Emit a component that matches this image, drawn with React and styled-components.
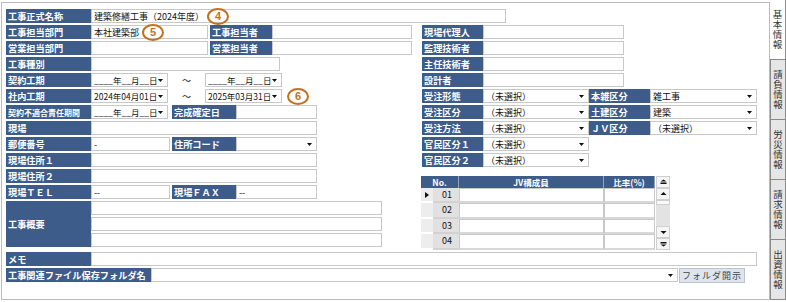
import React from 'react'
import styled, { createGlobalStyle } from 'styled-components'

const GlobalStyle = createGlobalStyle`
  html, body { margin: 0; padding: 0; background: #fff; }
  body { font-family: "Noto Sans CJK JP", "Noto Sans", sans-serif; color: #111; }
  * { box-sizing: border-box; }
`

const BLUE = '#3d5c8a'

const Screen = styled.div`
  display: flex;
  width: 786px;
  height: 302px;
  overflow: hidden;
`

const Panel = styled.div`
  width: 769px;
  height: 298px;
  margin: 2px 0 0 1px;
  border: 1px solid #bcbcbc;
  padding: 6px 0 0 4px;
  display: flex;
  flex-direction: column;
  gap: 2px;
`

const Row = styled.div`
  display: flex;
  align-items: center;
  height: 14px;
`

const Columns = styled.div`
  display: flex;
  align-items: flex-start;
`

const Col = styled.div`
  display: flex;
  flex-direction: column;
  gap: 2px;
  width: ${p => p.$w}px;
  margin-left: ${p => p.$ml || 0}px;
`

const Label = styled.div`
  flex: none;
  display: flex;
  align-items: center;
  width: ${p => p.$w || 85}px;
  height: ${p => p.$h || 14}px;
  margin-left: ${p => p.$ml || 0}px;
  padding-left: 2px;
  background: ${BLUE};
  color: #fff;
  font-size: ${p => p.$fs || 9.2}px;
  font-weight: bold;
  white-space: nowrap;
  overflow: hidden;
`

const Field = styled.div`
  flex: none;
  display: flex;
  align-items: center;
  width: ${p => p.$w}px;
  height: 14px;
  margin-left: ${p => p.$ml || 0}px;
  padding: 0 2px;
  background: #fff;
  border: 1px solid #c8c8c8;
  font-size: ${p => p.$fs || 9}px;
  white-space: nowrap;
`

const CaretIcon = styled.svg`
  flex: none;
  margin-left: auto;
  margin-right: 2px;
`

const Tilde = styled.div`
  flex: none;
  width: 37px;
  text-align: center;
  font-size: 9px;
`

const Badge = styled.span`
  flex: none;
  display: inline-flex;
  align-items: center;
  justify-content: center;
  width: 22px;
  height: 17px;
  margin-left: ${p => p.$ml || 3}px;
  border: 2px solid #c4701f;
  border-radius: 50%;
  color: #c4701f;
  font-size: 11px;
  font-weight: bold;
  font-family: "Liberation Sans", sans-serif;
`

const Block = styled.div`
  display: flex;
`

const Stack = styled.div`
  display: flex;
  flex-direction: column;
  gap: 2px;
`

const FolderButton = styled.div`
  flex: none;
  width: 66px;
  height: 15px;
  margin-left: 1px;
  display: flex;
  align-items: center;
  justify-content: center;
  background: #dfe5ee;
  border: 1px solid #b9c2cf;
  color: #444;
  font-size: 9px;
  letter-spacing: 1px;
  white-space: nowrap;
`

/* JV table */
const JvWrap = styled.div`
  display: flex;
  margin: 7px 0 0 -1px;
`

const JvGrid = styled.div`
  display: grid;
  grid-template-columns: 12px 26px 145px 51px;
  grid-template-rows: 12px 15px 16px 15px 16px;
`

const HeadCell = styled.div`
  grid-column: span ${p => p.$span || 1};
  background: ${BLUE};
  color: #fff;
  font-size: 8.5px;
  font-weight: bold;
  line-height: 12px;
  text-align: center;
  border-right: 1px solid #8fa3bf;
`

const IndCell = styled.div`
  display: flex;
  align-items: center;
  justify-content: center;
  background: #ededed;
  border-bottom: 2px solid #fff;
`

const NoCell = styled.div`
  background: #e1e1e1;
  border-bottom: 2px solid #d2d2d2;
  font-size: 9px;
  text-align: right;
  padding-right: 7px;
  line-height: 13px;
`

const DataCell = styled.div`
  background: #fff;
  border: 1px solid #c8c8c8;
  border-bottom-width: 2px;
  border-bottom-color: #d8d8d8;
`

const ScrollBar = styled.div`
  display: flex;
  flex-direction: column;
  width: 14px;
  height: 74px;
  margin-left: 1px;
  background: #e3e3e3;
`

const ScrollBtn = styled.div`
  height: 12px;
  display: flex;
  align-items: center;
  justify-content: center;
  background: #f5f5f5;
  border: 1px solid #d0d0d0;
`

const Thumb = styled.div`
  height: 5px;
  background: #fafafa;
  border: 1px solid #cfcfcf;
`

const Track = styled.div`
  flex: 1;
`

/* tabs */
const TabStrip = styled.div`
  width: 16px;
  height: 300px;
  display: flex;
  flex-direction: column;
`

const Tab = styled.div`
  height: 60px;
  display: flex;
  align-items: center;
  justify-content: center;
  background: ${p => (p.$active ? '#fff' : '#e6e6e6')};
  border-right: 1px solid #8a8a8a;
  border-bottom: 1px solid #8a8a8a;
  border-left: ${p => (p.$active ? 'none' : '1px solid #8a8a8a')};
  color: #333;
  font-size: 9.5px;
  span {
    writing-mode: vertical-rl;
    text-orientation: upright;
    letter-spacing: 0.5px;
  }
`

function Caret() {
  return (
    <CaretIcon width="5" height="3" viewBox="0 0 5 3">
      <path d="M0 0h5L2.5 3z" fill="#111" />
    </CaretIcon>
  )
}

function Select({ w, ml, fs, value }) {
  return (
    <Field $w={w} $ml={ml} $fs={fs}>
      <span>{value}</span>
      <Caret />
    </Field>
  )
}

function DateBox({ value = '____年__月__日' }) {
  return <Select w={77} fs={8.5} value={value} />
}

function ScrollIcon({ dir, bar }) {
  const up = dir === 'up'
  return (
    <svg width="7" height="6" viewBox="0 0 7 6">
      {up ? <path d={bar ? 'M0.5 2.5L3.5 0.5 6.5 2.5z' : 'M0.5 4L3.5 1 6.5 4z'} fill="#111" />
          : <path d={bar ? 'M0.5 3.5L3.5 5.5 6.5 3.5z' : 'M0.5 2L3.5 5 6.5 2z'} fill="#111" />}
      {bar && <rect x="0.5" y={up ? 3.5 : 1} width="6" height="1.5" fill="#111" />}
    </svg>
  )
}

function Pointer() {
  return (
    <svg width="4" height="6" viewBox="0 0 4 6">
      <path d="M0 0L4 3 0 6z" fill="#111" />
    </svg>
  )
}

const jvRows = ['01', '02', '03', '04']
const tabs = ['基本情報', '請負情報', '労災情報', '請求情報', '出資情報']

export default function App() {
  return (
    <Screen>
      <GlobalStyle />
      <Panel>
        <Row>
          <Label>工事正式名称</Label>
          <Field $w={415}>
            建築修繕工事（2024年度）
            <Badge>4</Badge>
          </Field>
        </Row>

        <Columns>
          <Col $w={406}>
            <Row>
              <Label>工事担当部門</Label>
              <Field $w={117}>
                本社建築部
                <Badge>5</Badge>
              </Field>
              <Label $w={62} $ml={2}>工事担当者</Label>
              <Field $w={140} />
            </Row>
            <Row>
              <Label>営業担当部門</Label>
              <Field $w={117} />
              <Label $w={62} $ml={2}>営業担当者</Label>
              <Field $w={140} />
            </Row>
            <Row>
              <Label>工事種別</Label>
              <Field $w={189} />
            </Row>
            <Row>
              <Label>契約工期</Label>
              <DateBox />
              <Tilde>～</Tilde>
              <DateBox />
            </Row>
            <Row>
              <Label>社内工期</Label>
              <DateBox value="2024年04月01日" />
              <Tilde>～</Tilde>
              <DateBox value="2025年03月31日" />
              <Badge $ml={5}>6</Badge>
            </Row>
            <Row>
              <Label $fs={8}>契約不適合責任期間</Label>
              <DateBox />
              <Label $w={64} $ml={4}>完成確定日</Label>
              <Field $w={81} />
            </Row>
            <Row>
              <Label>現場</Label>
              <Field $w={226} />
            </Row>
            <Row>
              <Label>郵便番号</Label>
              <Field $w={79}>-</Field>
              <Label $w={64} $ml={2}>住所コード</Label>
              <Select w={81} value="" />
            </Row>
            <Row>
              <Label>現場住所１</Label>
              <Field $w={226} />
            </Row>
            <Row>
              <Label>現場住所２</Label>
              <Field $w={226} />
            </Row>
            <Row>
              <Label>現場ＴＥＬ</Label>
              <Field $w={79}>--</Field>
              <Label $w={64} $ml={2}>現場ＦＡＸ</Label>
              <Field $w={81}>--</Field>
            </Row>
            <Block>
              <Label $h={46}>工事概要</Label>
              <Stack>
                <Field $w={291} />
                <Field $w={291} />
                <Field $w={291} />
              </Stack>
            </Block>
          </Col>

          <Col $w={335} $ml={10}>
            <Row>
              <Label $w={61}>現場代理人</Label>
              <Field $w={141} />
            </Row>
            <Row>
              <Label $w={61}>監理技術者</Label>
              <Field $w={141} />
            </Row>
            <Row>
              <Label $w={61}>主任技術者</Label>
              <Field $w={141} />
            </Row>
            <Row>
              <Label $w={61}>設計者</Label>
              <Field $w={141} />
            </Row>
            <Row>
              <Label $w={61}>受注形態</Label>
              <Select w={106} value="（未選択）" />
              <Label $w={61}>本雑区分</Label>
              <Select w={107} value="雑工事" />
            </Row>
            <Row>
              <Label $w={61}>受注区分</Label>
              <Select w={106} value="（未選択）" />
              <Label $w={61}>土建区分</Label>
              <Select w={107} value="建築" />
            </Row>
            <Row>
              <Label $w={61}>受注方法</Label>
              <Select w={106} value="（未選択）" />
              <Label $w={61}>ＪＶ区分</Label>
              <Select w={107} value="（未選択）" />
            </Row>
            <Row>
              <Label $w={61}>官民区分１</Label>
              <Select w={106} value="（未選択）" />
            </Row>
            <Row>
              <Label $w={61}>官民区分２</Label>
              <Select w={106} value="（未選択）" />
            </Row>

            <JvWrap>
              <JvGrid>
                <HeadCell $span={2}>No.</HeadCell>
                <HeadCell>JV構成員</HeadCell>
                <HeadCell>比率(%)</HeadCell>
                {jvRows.map((n, i) => (
                  <React.Fragment key={n}>
                    <IndCell>{i === 0 && <Pointer />}</IndCell>
                    <NoCell>{n}</NoCell>
                    <DataCell />
                    <DataCell />
                  </React.Fragment>
                ))}
              </JvGrid>
              <ScrollBar>
                <ScrollBtn><ScrollIcon dir="up" bar /></ScrollBtn>
                <ScrollBtn><ScrollIcon dir="up" /></ScrollBtn>
                <Thumb />
                <Track />
                <ScrollBtn><ScrollIcon dir="down" /></ScrollBtn>
                <ScrollBtn><ScrollIcon dir="down" bar /></ScrollBtn>
              </ScrollBar>
            </JvWrap>
          </Col>
        </Columns>

        <Row>
          <Label>メモ</Label>
          <Field $w={666} />
        </Row>
        <Row>
          <Label $w={145}>工事関連ファイル保存フォルダ名</Label>
          <Select w={527} value="" />
          <FolderButton>フォルダ開示</FolderButton>
        </Row>
      </Panel>

      <TabStrip>
        {tabs.map((t, i) => (
          <Tab key={t} $active={i === 0}>
            <span>{t}</span>
          </Tab>
        ))}
      </TabStrip>
    </Screen>
  )
}
